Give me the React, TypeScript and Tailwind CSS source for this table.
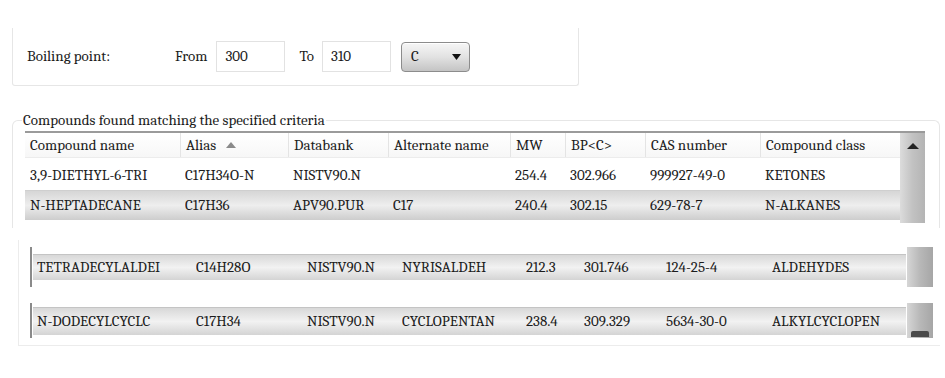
const header = [
  { label: 'Compound name', w: 155 },
  { label: 'Alias', w: 108, sort: true },
  { label: 'Databank', w: 100 },
  { label: 'Alternate name', w: 122 },
  { label: 'MW', w: 55 },
  { label: 'BP<C>', w: 80 },
  { label: 'CAS number', w: 115 },
  { label: 'Compound class', w: 140 },
]

const topRows = [
  ['3,9-DIETHYL-6-TRI', 'C17H34O-N', 'NISTV90.N', '', '254.4', '302.966', '999927-49-0', 'KETONES'],
  ['N-HEPTADECANE', 'C17H36', 'APV90.PUR', 'C17', '240.4', '302.15', '629-78-7', 'N-ALKANES'],
]

const lowerWidths = [159, 111, 95, 124, 58, 82, 106, 138]

const lowerRows = [
  ['TETRADECYLALDEI', 'C14H28O', 'NISTV90.N', 'NYRISALDEH', '212.3', '301.746', '124-25-4', 'ALDEHYDES'],
  ['N-DODECYLCYCLC', 'C17H34', 'NISTV90.N', 'CYCLOPENTAN', '238.4', '309.329', '5634-30-0', 'ALKYLCYCLOPEN'],
]

function Cells({ row, widths }: { row: string[]; widths: number[] }) {
  return (
    <>
      {row.map((c, i) => (
        <div key={i} className="shrink-0 overflow-hidden whitespace-nowrap" style={{ width: widths[i] }}>
          {c}
        </div>
      ))}
    </>
  )
}

export default function App() {
  const widths = header.map((h) => h.w)

  return (
    <div className="w-[945px] h-[378px] bg-white text-[15px] text-[#1c1c1c] overflow-hidden pt-[28px] font-serif **:font-serif">
      {/* Boiling point filter */}
      <div className="ml-[12px] w-[567px] h-[58px] border-l border-r border-b border-[#e6e6e6] rounded-b-[3px] flex items-center pl-[14px]">
        <span className="w-[148px]">Boiling point:</span>
        <span>From</span>
        <div className="ml-[9px] w-[69px] h-[31px] border border-[#e2e2e2] flex items-center pl-[8px]">300</div>
        <span className="ml-[14px]">To</span>
        <div className="ml-[8px] w-[69px] h-[31px] border border-[#e2e2e2] flex items-center pl-[8px]">310</div>
        <div className="ml-[10px] w-[69px] h-[30px] rounded-[4px] border border-[#8c8c8c] bg-gradient-to-b from-[#f6f6f6] via-[#e2e2e2] to-[#c4c4c4] flex items-center justify-between pl-[9px] pr-[8px] shadow-[inset_0_1px_0_#fff]">
          <span>C</span>
          <svg width="9" height="6" viewBox="0 0 9 6">
            <path d="M0 0 H9 L4.5 6 Z" fill="#111" />
          </svg>
        </div>
      </div>

      {/* Results */}
      <fieldset className="mt-[26px] ml-[12px] w-[928px] h-[116px] border-l border-t border-r border-[#e6e6e6] rounded-t-[6px]">
        <legend className="ml-[9px] px-[1px] leading-[16px]">Compounds found matching the specified criteria</legend>
        <div className="mt-[3px] ml-[12px] w-[900px] flex">
          <div className="w-[875px]">
            <div className="h-[27px] border-t-2 border-[#9a9a9a] flex items-center bg-gradient-to-b from-white to-[#f7f7f7] border-b border-b-[#ececec]">
              {header.map((h, i) => (
                <div
                  key={i}
                  className={`shrink-0 h-full flex items-center pl-[5px] ${i > 0 ? 'border-l border-[#e4e4e4]' : ''}`}
                  style={{ width: h.w }}
                >
                  {h.label}
                  {h.sort && (
                    <svg className="ml-[10px]" width="10" height="6" viewBox="0 0 10 6">
                      <path d="M0 6 L5 0 L10 6 Z" fill="#8a8a8a" />
                    </svg>
                  )}
                </div>
              ))}
            </div>
            <div className="h-[32px] flex items-center pl-[5px] pt-[2px]">
              <Cells row={topRows[0]} widths={widths} />
            </div>
            <div className="h-[30px] flex items-center pl-[5px] border-t border-[#cfcfcf] bg-gradient-to-b from-[#d6d6d6] via-[#eeeeee] to-[#cdcdcd]">
              <Cells row={topRows[1]} widths={widths} />
            </div>
          </div>
          <div className="w-[25px] h-[92px] border-t-2 border-[#9a9a9a] bg-gradient-to-r from-[#dcdcdc] via-[#c2c2c2] to-[#b4b4b4] flex justify-center pt-[10px]">
            <svg width="12" height="6" viewBox="0 0 12 6">
              <path d="M0 6 L6 0 L12 6 Z" fill="#222" />
            </svg>
          </div>
        </div>
      </fieldset>

      {/* Additional rows */}
      <div className="mt-[12px] ml-[18px] w-[922px] border-l border-b border-[#ececec] pl-[11px] pt-[7px] pb-[7px] flex flex-col gap-[16px]">
        {lowerRows.map((row, r) => (
          <div key={r} className={`flex items-center ${r === 0 ? 'h-[40px]' : 'h-[35px]'}`}>
            <div className="w-[2px] h-full bg-[#8a8a8a]" />
            <div
              className={`ml-[1px] w-[873px] flex items-center pl-[4px] bg-gradient-to-b from-[#d8d8d8] via-[#f2f2f2] to-[#d4d4d4] border-t border-[#c4c4c4] ${r === 0 ? 'h-[26px]' : 'h-[28px]'}`}
            >
              <Cells row={row} widths={lowerWidths} />
            </div>
            <div className="ml-[1px] w-[26px] h-full bg-gradient-to-r from-[#d6d6d6] via-[#b8b8b8] to-[#a6a6a6] flex flex-col justify-end items-center">
              {r === 1 && <div className="w-[18px] h-[6px] rounded-t-[2px] bg-[#4a4a4a] mb-[1px]" />}
            </div>
          </div>
        ))}
      </div>
    </div>
  )
}
